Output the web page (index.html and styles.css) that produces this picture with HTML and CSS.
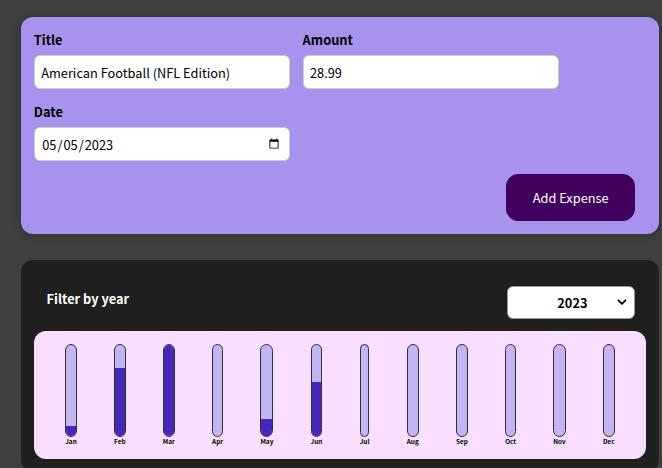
FILE: index.html
```
<!DOCTYPE html>
<html lang="en">
<head>
<meta charset="utf-8">
<title>Expenses</title>
<link rel="stylesheet" href="styles.css">
</head>
<body>
<div class="app">
  <div class="new-expense">
    <form>
      <div class="new-expense__controls">
        <div class="new-expense__control">
          <label>Title</label>
          <input type="text" value="American Football (NFL Edition)">
        </div>
        <div class="new-expense__control">
          <label>Amount</label>
          <input type="number" value="28.99" step="0.01">
        </div>
        <div class="new-expense__control">
          <label>Date</label>
          <input type="date" value="2023-05-05">
        </div>
      </div>
      <div class="new-expense__actions">
        <button type="button" class="btn">Add Expense</button>
      </div>
    </form>
  </div>

  <div class="expenses">
    <div class="expenses-filter">
      <div class="expenses-filter__control">
        <label>Filter by year</label>
        <div class="select-wrap">
          <select>
            <option>2023</option>
            <option>2022</option>
            <option>2021</option>
            <option>2020</option>
          </select>
          <svg class="chevron" width="10" height="10" viewBox="0 0 10 10"><path d="M1.5 3.3 L5 6.8 L8.5 3.3" fill="none" stroke="#000" stroke-width="1.8" stroke-linecap="round" stroke-linejoin="round"/></svg>
        </div>
      </div>
    </div>
    <div class="chart">
      <div class="chart-bar"><div class="chart-bar__inner"><div class="chart-bar__fill" style="height:11%"></div></div><div class="chart-bar__label">Jan</div></div>
      <div class="chart-bar"><div class="chart-bar__inner"><div class="chart-bar__fill" style="height:75%"></div></div><div class="chart-bar__label">Feb</div></div>
      <div class="chart-bar"><div class="chart-bar__inner"><div class="chart-bar__fill" style="height:100%"></div></div><div class="chart-bar__label">Mar</div></div>
      <div class="chart-bar"><div class="chart-bar__inner"><div class="chart-bar__fill" style="height:0%"></div></div><div class="chart-bar__label">Apr</div></div>
      <div class="chart-bar"><div class="chart-bar__inner"><div class="chart-bar__fill" style="height:19%"></div></div><div class="chart-bar__label">May</div></div>
      <div class="chart-bar"><div class="chart-bar__inner"><div class="chart-bar__fill" style="height:60%"></div></div><div class="chart-bar__label">Jun</div></div>
      <div class="chart-bar"><div class="chart-bar__inner"><div class="chart-bar__fill" style="height:0%"></div></div><div class="chart-bar__label">Jul</div></div>
      <div class="chart-bar"><div class="chart-bar__inner"><div class="chart-bar__fill" style="height:0%"></div></div><div class="chart-bar__label">Aug</div></div>
      <div class="chart-bar"><div class="chart-bar__inner"><div class="chart-bar__fill" style="height:0%"></div></div><div class="chart-bar__label">Sep</div></div>
      <div class="chart-bar"><div class="chart-bar__inner"><div class="chart-bar__fill" style="height:0%"></div></div><div class="chart-bar__label">Oct</div></div>
      <div class="chart-bar"><div class="chart-bar__inner"><div class="chart-bar__fill" style="height:0%"></div></div><div class="chart-bar__label">Nov</div></div>
      <div class="chart-bar"><div class="chart-bar__inner"><div class="chart-bar__fill" style="height:0%"></div></div><div class="chart-bar__label">Dec</div></div>
    </div>
  </div>
</div>
</body>
</html>
```
FILE: styles.css
```
* {
  box-sizing: border-box;
}

html {
  font-family: "Noto Sans CJK JP", "Noto Sans", sans-serif;
  font-size: 12.8px;
}

body {
  margin: 0;
  background-color: #3f3f3f;
  overflow: hidden;
}

.app {
  padding-top: 17px;
}

.new-expense {
  background-color: #a892ee;
  padding: 1rem;
  margin: 0 0 26px 21px;
  width: 638px;
  border-radius: 12px;
  box-shadow: 0 1px 8px rgba(0, 0, 0, 0.25);
}

.new-expense__controls {
  display: flex;
  flex-wrap: wrap;
  gap: 1rem;
  margin-bottom: 1rem;
}

.new-expense__control label {
  display: block;
  font-weight: bold;
  margin-bottom: 0.5rem;
  line-height: 19px;
  color: #000;
}

.new-expense__control input {
  font: inherit;
  line-height: 19px;
  padding: 0.5rem;
  border-radius: 6px;
  border: 1px solid #ccc;
  width: 20rem;
  height: 34px;
  background: #fff;
  color: #000;
  outline: none;
}

.new-expense__control input[type="number"]::-webkit-inner-spin-button,
.new-expense__control input[type="number"]::-webkit-outer-spin-button {
  -webkit-appearance: none;
  margin: 0;
}

.new-expense__actions {
  text-align: right;
}

.btn {
  font: inherit;
  line-height: 19px;
  padding: 0.8rem 2rem;
  height: 47px;
  border: 1px solid #40005d;
  background-color: #40005d;
  color: #fff;
  border-radius: 12px;
  margin-right: 11px;
  cursor: pointer;
}

.expenses {
  padding: 1rem;
  background-color: #1f1f1f;
  margin: 0 0 26px 21px;
  width: 638px;
  border-radius: 12px;
}

.expenses-filter {
  color: #fff;
  padding: 0 1rem;
}

.expenses-filter__control {
  display: flex;
  align-items: center;
  justify-content: space-between;
  margin: 1rem 0;
}

.expenses-filter label {
  font-weight: bold;
  line-height: 19px;
  margin-bottom: 0.5rem;
}

.select-wrap {
  position: relative;
  margin-right: -2px;
}

.select-wrap select {
  font: inherit;
  font-weight: bold;
  line-height: 19px;
  -webkit-appearance: none;
  appearance: none;
  width: 128px;
  height: 33px;
  padding: 0 20px 0 22px;
  text-align: center;
  text-align-last: center;
  border: 1px solid #9a9a9a;
  border-radius: 6px;
  background: #fff;
  color: #000;
  outline: none;
}

.chevron {
  position: absolute;
  right: 8px;
  top: 11px;
  pointer-events: none;
}

.chart {
  padding: 1rem;
  border-radius: 12px;
  background-color: #f8dfff;
  display: flex;
  justify-content: space-around;
  height: 10rem;
}

.chart-bar {
  height: 100%;
  display: flex;
  flex-direction: column;
  align-items: center;
}

.chart-bar__inner {
  height: 100%;
  width: 100%;
  border: 1px solid #313131;
  border-radius: 12px;
  background-color: #c3b4f3;
  overflow: hidden;
  display: flex;
  flex-direction: column;
  justify-content: flex-end;
}

.chart-bar__fill {
  background-color: #4826b9;
  width: 100%;
}

.chart-bar__label {
  font-weight: bold;
  font-size: 0.5rem;
  line-height: 9.5px;
  text-align: center;
  color: #000;
}
```
